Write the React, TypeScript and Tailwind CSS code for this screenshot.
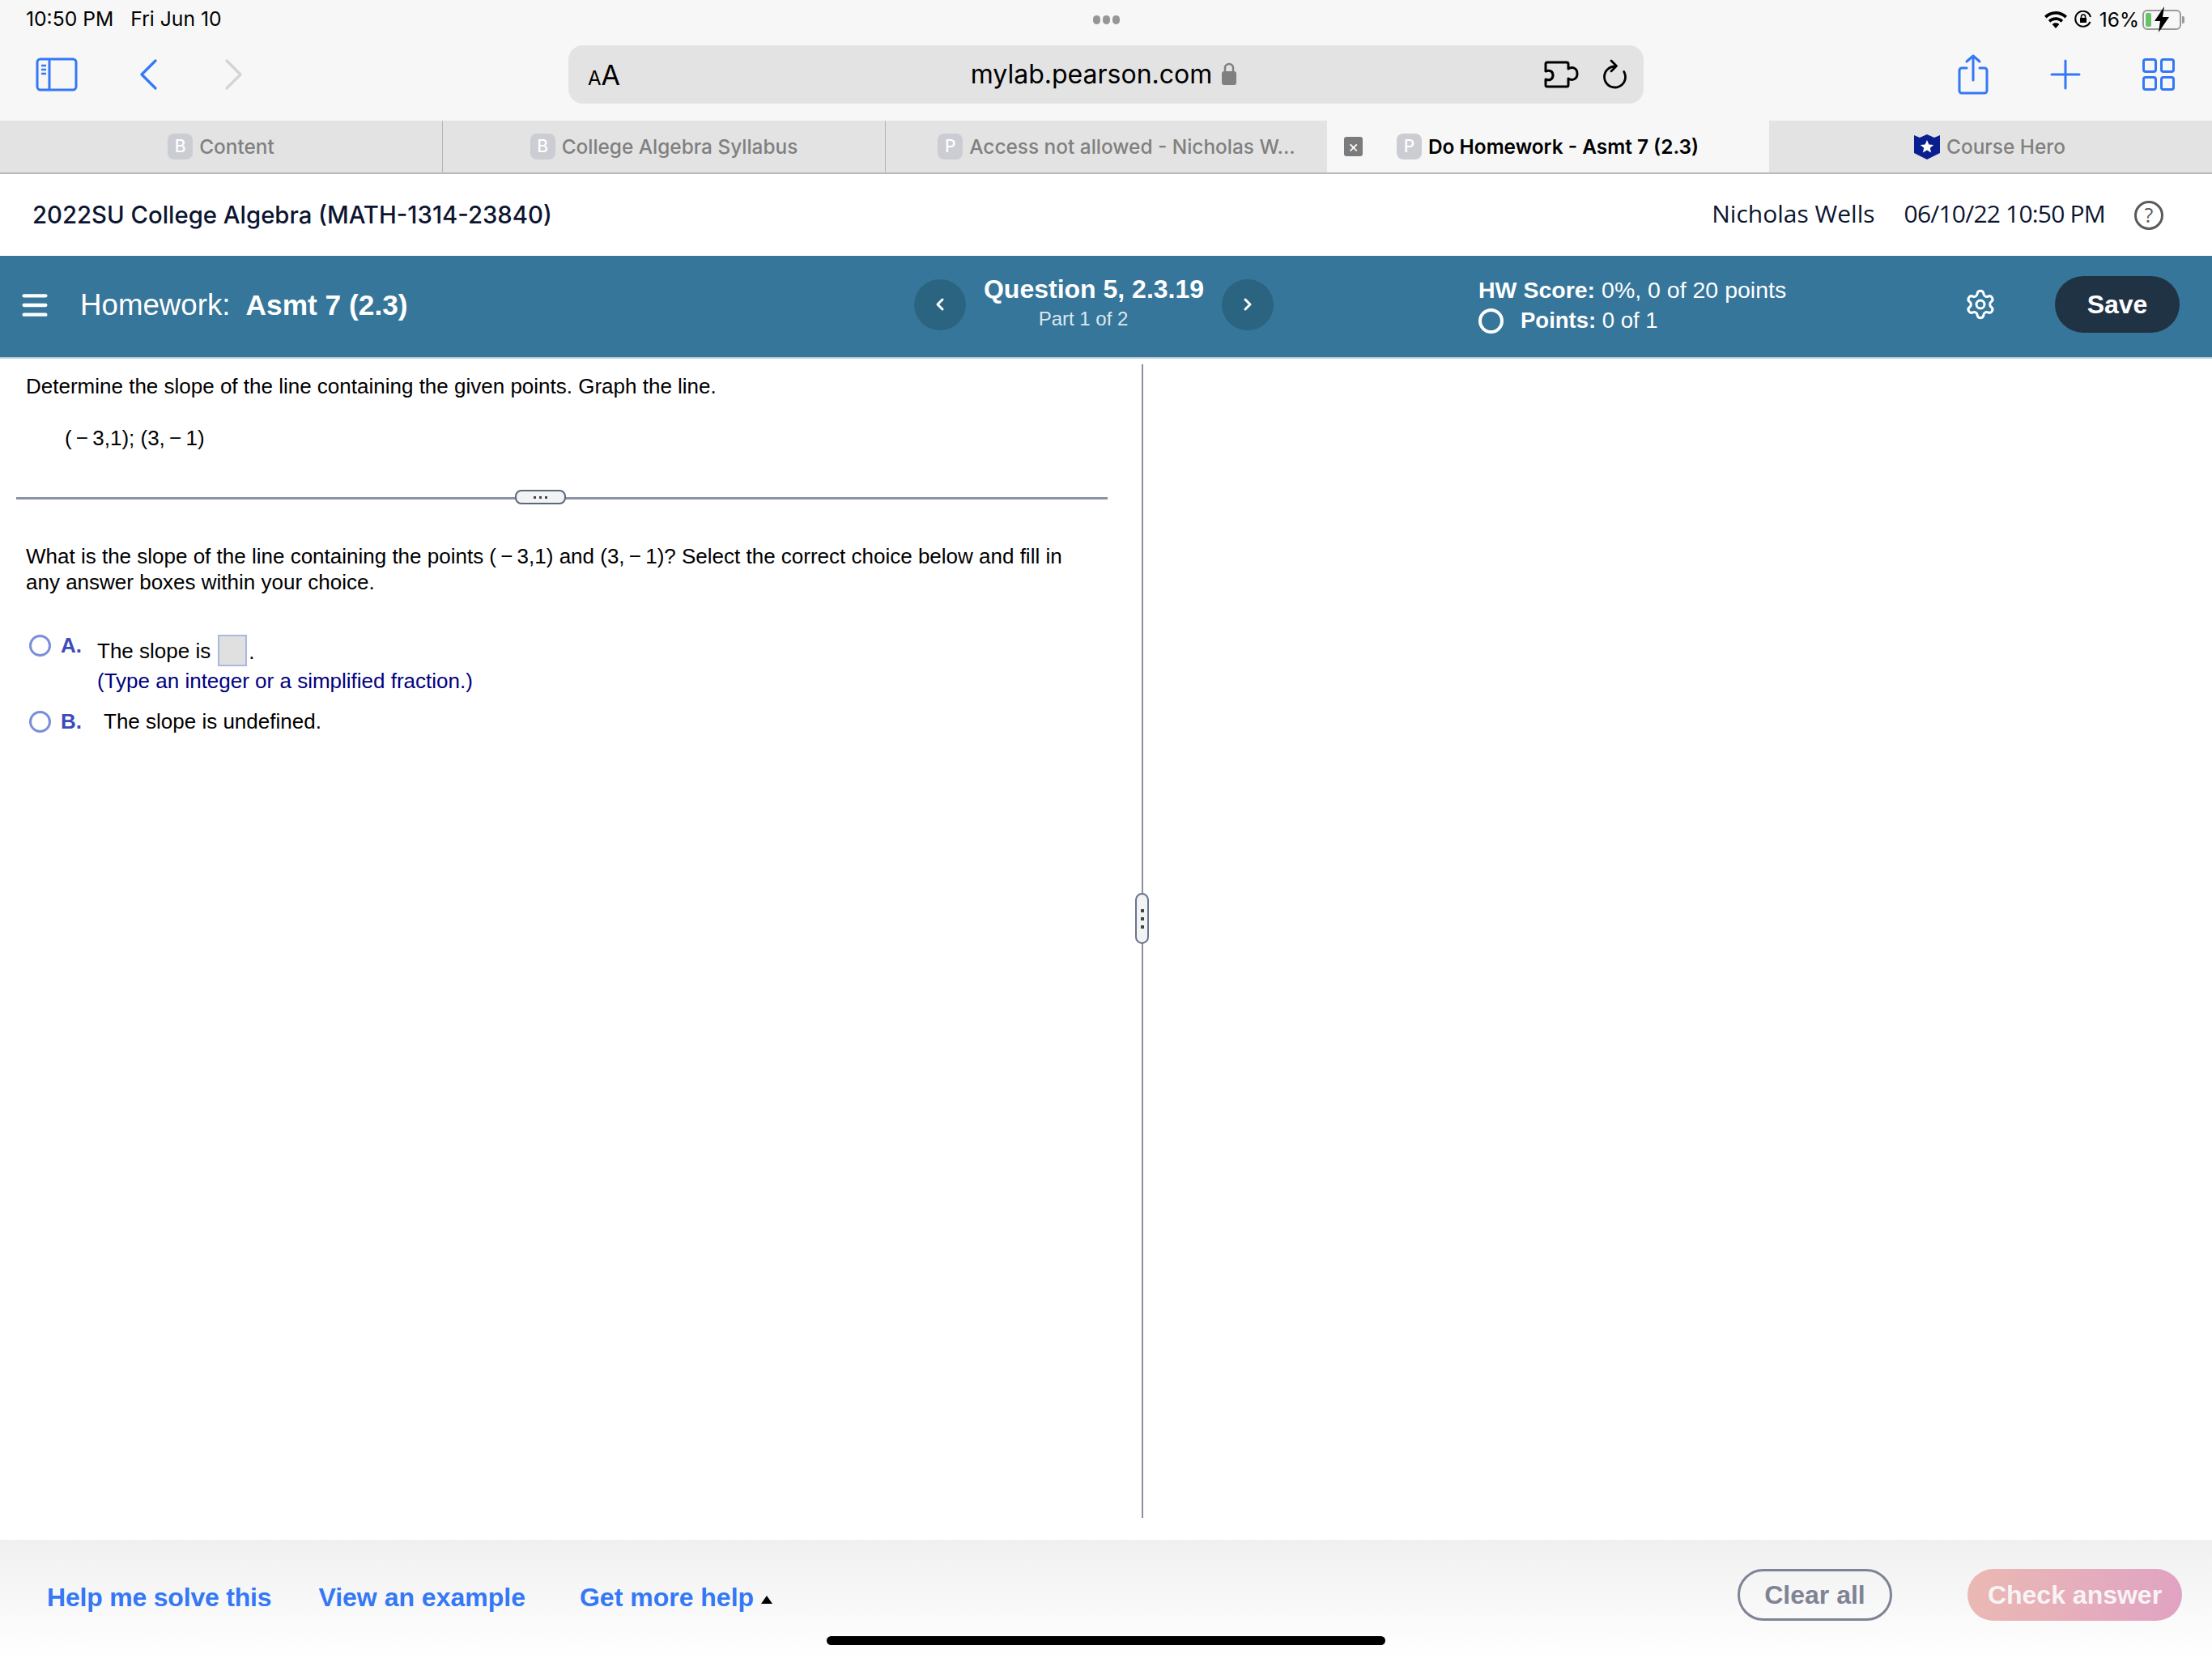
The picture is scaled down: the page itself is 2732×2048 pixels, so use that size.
import { ChevronLeft, ChevronRight, Menu, Settings } from "lucide-react";

const Blue = "#3478f6";

function Favicon({ letter }: { letter: string }) {
  return (
    <span className="flex h-[32px] w-[31px] shrink-0 items-center justify-center rounded-[8px] bg-[#cbcdd3] text-[21px] font-medium text-white">
      {letter}
    </span>
  );
}

function Tab({ letter, title, width, divider, shift }: { letter: string; title: string; width: string; divider?: boolean; shift?: boolean }) {
  return (
    <div className={`flex h-full items-center justify-center gap-[8px] bg-[#e3e3e3] ${width} ${divider ? "border-r border-[#b5b5b5]" : ""} ${shift ? "pl-[25px]" : ""}`}>
      <Favicon letter={letter} />
      <span className="text-[24.400px] font-medium text-[#808080]">{title}</span>
    </div>
  );
}

function SidebarIcon() {
  return (
    <svg width="52" height="42" viewBox="0 0 52 42" fill="none" stroke={Blue} strokeWidth="3">
      <rect x="2" y="2" width="48" height="38" rx="4" />
      <path d="M17 2v38" />
      <path d="M7 10h6M7 15h6M7 20h6" strokeWidth="2.5" />
    </svg>
  );
}

function BackIcon({ color, flip }: { color: string; flip?: boolean }) {
  return (
    <svg width="22" height="38" viewBox="0 0 22 38" fill="none" stroke={color} strokeWidth="3.2" strokeLinecap="round" strokeLinejoin="round" className={flip ? "-scale-x-100" : ""}>
      <path d="M20 2 3 19l17 17" />
    </svg>
  );
}

function PuzzleIcon() {
  return (
    <svg width="44" height="34" viewBox="0 0 44 34" fill="none" stroke="#000" strokeWidth="3" strokeLinejoin="round">
      <path d="M3 4a2 2 0 0 1 2-2h24a2 2 0 0 1 2 2v6c5-3 11-1 11 6s-6 9-11 6v8a2 2 0 0 1-2 2H5a2 2 0 0 1-2-2v-7c5 2 9 0 9-5s-4-7-9-5z" />
    </svg>
  );
}

function ReloadIcon() {
  return (
    <svg width="32" height="38" viewBox="0 0 32 38" fill="none" stroke="#000" strokeWidth="2.8" strokeLinecap="round" strokeLinejoin="round">
      <path d="M17 9A13 13 0 1 0 29.500 22c0-2.500-.6-4.500-1.800-6.500" />
      <path d="M12 2l6.500 6.500L12 15" />
    </svg>
  );
}

function ShareIcon() {
  return (
    <svg width="38" height="50" viewBox="0 0 38 50" fill="none" stroke={Blue} strokeWidth="3" strokeLinecap="round" strokeLinejoin="round">
      <path d="M11 17H5a3 3 0 0 0-3 3v25a3 3 0 0 0 3 3h28a3 3 0 0 0 3-3V20a3 3 0 0 0-3-3h-6" />
      <path d="M19 32V2M11 9l8-7 8 7" />
    </svg>
  );
}

function PlusIcon() {
  return (
    <svg width="38" height="38" viewBox="0 0 38 38" fill="none" stroke={Blue} strokeWidth="3" strokeLinecap="round">
      <path d="M19 2v34M2 19h34" />
    </svg>
  );
}

function TabsIcon() {
  return (
    <svg width="40" height="40" viewBox="0 0 40 40" fill="none" stroke={Blue} strokeWidth="3">
      <rect x="1.500" y="1.500" width="15" height="15" rx="2.500" />
      <rect x="23.500" y="1.500" width="15" height="15" rx="2.500" />
      <rect x="1.500" y="23.500" width="15" height="15" rx="2.500" />
      <rect x="23.500" y="23.500" width="15" height="15" rx="2.500" />
    </svg>
  );
}

function StatusIcons() {
  return (
    <div className="flex items-center justify-end gap-[9px] pr-[38px]">
      <svg width="28" height="21" viewBox="0 0 28 21" fill="#000">
        <path d="M14 0C8.600 0 3.800 2.100 0 5.700l2.600 2.800C5.700 5.600 9.600 3.800 14 3.800s8.300 1.800 11.400 4.700L28 5.700C24.200 2.100 19.400 0 14 0z" />
        <path d="M14 7.200c-3.500 0-6.800 1.400-9.200 3.700l2.600 2.800c1.700-1.700 4.100-2.700 6.600-2.700s4.900 1 6.600 2.700l2.600-2.800c-2.400-2.300-5.700-3.700-9.200-3.700z" />
        <path d="M14 14.200c-1.700 0-3.200.6-4.400 1.700L14 21l4.400-5.100c-1.200-1.100-2.700-1.700-4.400-1.700z" />
      </svg>
      <svg width="22" height="22" viewBox="0 0 22 22" fill="none" stroke="#000" strokeWidth="2">
        <path d="M19.500 14A9.500 9.500 0 1 1 20 8" />
        <rect x="7" y="9" width="8" height="6" fill="#000" stroke="none" />
        <path d="M8.500 9V7.500a2.500 2.500 0 0 1 5 0V9" strokeWidth="1.500" />
      </svg>
      <span className="text-[24.500px] text-black">16%</span>
      <div className="relative ml-[-5px] flex h-[25px] w-[48px] items-center rounded-[6px] border-2 border-[#9a9a9a] p-[2px]">
        <div className="h-full w-[7px] rounded-[2px] bg-[#65c466]" />
        <svg width="20" height="32" viewBox="0 0 20 32" fill="#000" className="absolute left-[12px] top-[-6px]">
          <path d="M13 0 1 18h7l-2 14 13-19h-8z" />
        </svg>
        <div className="absolute right-[-6px] top-[6px] h-[9px] w-[3px] rounded-r-[2px] bg-[#9a9a9a]" />
      </div>
    </div>
  );
}

function BrowserChrome() {
  return (
    <div className="bg-[#f7f7f7] font-['Inter',sans-serif]">
      <div className="grid h-[47px] grid-cols-3 items-center pt-[1px] text-[24.700px] text-black">
        <div className="flex gap-[21px] pl-[32px]">
          <span>10:50 PM</span>
          <span>Fri Jun 10</span>
        </div>
        <div className="flex justify-center gap-[3px] pl-[1px]">
          <span className="h-[11px] w-[9px] rounded-full bg-[#969696]" />
          <span className="h-[11px] w-[9px] rounded-full bg-[#969696]" />
          <span className="h-[11px] w-[9px] rounded-full bg-[#969696]" />
        </div>
        <StatusIcons />
      </div>
      <div className="flex h-[101px] items-start pt-[9px]">
        <div className="flex h-[72px] w-[702px] items-center pl-[44px]">
          <SidebarIcon />
          <div className="ml-[76px]">
            <BackIcon color={Blue} />
          </div>
          <div className="ml-[84px]">
            <BackIcon color="#d4d4d4" flip />
          </div>
        </div>
        <div className="flex h-[72px] w-[1328px] items-center rounded-[18px] bg-[#e3e3e3] pl-[24px] pr-[20px]">
          <span className="w-[40px] text-black">
            <span className="text-[24px]">A</span>
            <span className="text-[34px]">A</span>
          </span>
          <div className="flex flex-1 items-center justify-center gap-[12px] pl-[54px] text-[32px] text-black">
            <span>mylab.pearson.com</span>
            <svg width="18" height="28" viewBox="0 0 18 28" className="mt-[-2px]">
              <path d="M4 12V7a5 5 0 0 1 10 0v5" fill="none" stroke="#808080" strokeWidth="2.500" />
              <rect x="0" y="11" width="18" height="17" rx="3" fill="#808080" />
            </svg>
          </div>
          <div className="flex items-center gap-[28px]">
            <PuzzleIcon />
            <ReloadIcon />
          </div>
        </div>
        <div className="flex h-[72px] flex-1 items-center pl-[388px]">
          <ShareIcon />
          <div className="ml-[76px]">
            <PlusIcon />
          </div>
          <div className="ml-[76px]">
            <TabsIcon />
          </div>
        </div>
      </div>
      <div className="flex h-[67px] border-b-2 border-[#b9b9b9] pt-[1px]">
        <Tab letter="B" title="Content" width="w-[547px]" divider />
        <Tab letter="B" title="College Algebra Syllabus" width="w-[547px]" divider />
        <Tab letter="P" title="Access not allowed - Nicholas W..." width="w-[545px]" shift />
        <div className="flex h-full w-[546px] items-center bg-[#f7f7f7] pl-[21px]">
          <span className="flex h-[24px] w-[23px] items-center justify-center rounded-[3px] bg-[#7b7b7b] text-[20px] leading-none text-white">×</span>
          <div className="ml-[42px] flex items-center gap-[8px]">
            <Favicon letter="P" />
            <span className="text-[24.400px] font-semibold text-black">Do Homework - Asmt 7 (2.3)</span>
          </div>
        </div>
        <div className="flex h-full flex-1 items-center justify-center gap-[7px] bg-[#e3e3e3] pr-[3px]">
          <svg width="34" height="32" viewBox="0 0 34 32">
            <path d="M1 2l7 3 9-4 9 4 7-3v22l-16 8-16-8z" fill="#0a1f8f" />
            <path d="m17 8 2.400 5.400 5.800.6-4.400 3.800 1.300 5.700-5.100-3-5.100 3 1.300-5.700L8.800 14l5.800-.6z" fill="#fff" />
          </svg>
          <span className="text-[24.400px] font-medium text-[#808080]">Course Hero</span>
        </div>
      </div>
    </div>
  );
}

function CourseHeader() {
  return (
    <div className="flex h-[101px] items-center justify-between bg-white pl-[40px] pr-[60px]">
      <span className="font-['Inter',sans-serif] text-[29.300px] font-medium text-[#0c1530]">2022SU College Algebra (MATH-1314-23840)</span>
      <div className="flex items-center pb-[5px] font-['Open_Sans',sans-serif] text-[30px] text-[#0c1530]">
        <span>Nicholas Wells</span>
        <span className="ml-[36px] tracking-[-0.8px]">06/10/22 10:50 PM</span>
        <span className="ml-[36px] mt-[5px] flex h-[36px] w-[36px] items-center justify-center rounded-full border-[3px] border-[#5a5a5a] text-[25px] font-medium text-[#5a5a5a]">?</span>
      </div>
    </div>
  );
}

function RoundNav({ children }: { children: React.ReactNode }) {
  return <div className="mb-[2px] flex h-[63px] w-[64px] shrink-0 items-center justify-center rounded-full bg-[#2b6480]">{children}</div>;
}

function AssignmentBar() {
  return (
    <div className="flex h-[127px] items-center border-b-2 border-[#b5c9d8] bg-[#36769a] pb-[3px] font-['Liberation_Sans',sans-serif] text-white">
      <div className="flex w-[1129px] items-center pl-[23px]">
        <Menu size={40} strokeWidth={2.600} />
        <span className="ml-[36px] text-[36.700px]">Homework:</span>
        <span className="ml-[19px] text-[35.300px] font-bold">Asmt 7 (2.3)</span>
      </div>
      <div className="flex w-[697px] items-center">
        <RoundNav>
          <ChevronLeft size={24} strokeWidth={3} />
        </RoundNav>
        <div className="flex w-[316px] flex-col items-center pb-[8px]">
          <span className="text-[32px] font-bold leading-[38px]">Question 5, 2.3.19</span>
          <span className="mt-[4px] pr-[26px] text-[24px] leading-[28px] text-[#dce8f0]">Part 1 of 2</span>
        </div>
        <RoundNav>
          <ChevronRight size={24} strokeWidth={3} />
        </RoundNav>
      </div>
      <div className="flex w-[600px] flex-col text-[28.500px]">
        <span className="leading-[36px]">
          <b>HW Score:</b> 0%, 0 of 20 points
        </span>
        <span className="mt-[2px] flex items-center leading-[36px]">
          <span className="h-[31px] w-[31px] rounded-full border-[4px] border-white" />
          <span className="ml-[21px] text-[27.500px]">
            <b>Points:</b> 0 of 1
          </span>
        </span>
      </div>
      <div className="mb-[2px] flex w-[112px] justify-start pl-[-2px]">
        <Settings size={40} strokeWidth={1.800} />
      </div>
      <button className="mb-[2px] flex h-[70px] w-[154px] items-center justify-center rounded-full bg-[#1f3344] text-[32px] font-bold">Save</button>
    </div>
  );
}

function Radio() {
  return <span className="block h-[27px] w-[27px] shrink-0 rounded-full border-[3px] border-[#7b8fd8] bg-white" />;
}

function QuestionPane() {
  return (
    <div className="relative w-[1410px] shrink-0 pt-[18px] text-[26px] leading-[32px] text-black">
      <p className="pl-[32px]">Determine the slope of the line containing the given points. Graph the line.</p>
      <p className="mt-[32px] pl-[80px]">{"(\u2009\u2212\u20093,1); (3,\u2009\u2212\u20091)"}</p>
      <div className="relative ml-[20px] mt-[57px] h-[3px] w-[1348px] bg-[#8a93a3]">
        <div className="absolute left-[616px] top-[-9px] flex h-[18px] w-[63px] items-center justify-center gap-[4px] rounded-[8px] border-2 border-[#5b6878] bg-[#f2f3f5]">
          <span className="h-[3px] w-[3px] bg-[#444]" />
          <span className="h-[3px] w-[3px] bg-[#444]" />
          <span className="h-[3px] w-[3px] bg-[#444]" />
        </div>
      </div>
      <p className="mt-[54px] w-[1330px] pl-[32px]">
        {"What is the slope of the line containing the points (\u2009\u2212\u20093,1) and (3,\u2009\u2212\u20091)? Select the correct choice below and fill in any answer boxes within your choice."}
      </p>
      <div className="mt-[49px] flex items-start pl-[36px]">
        <Radio />
        <span className="ml-[12px] font-bold leading-[27px] text-[#3b4cb8]">A.</span>
        <div className="ml-[19px]">
          <div className="flex items-center">
            <span>The slope is</span>
            <span className="ml-[9px] h-[39px] w-[36px] border-2 border-[#a9b8e0] bg-[#e0e0e0]" />
            <span className="ml-[2px] mt-[3px]">.</span>
          </div>
          <p className="mt-[2px] text-[#000080]">(Type an integer or a simplified fraction.)</p>
        </div>
      </div>
      <div className="mt-[18px] flex items-center pl-[36px]">
        <Radio />
        <span className="ml-[12px] font-bold text-[#3b4cb8]">B.</span>
        <span className="ml-[27px]">The slope is undefined.</span>
      </div>
    </div>
  );
}

function PaneDivider() {
  return (
    <div className="relative mt-[7px] h-[1425px] w-[2px] bg-[#8a8f9e]">
      <div className="absolute left-[-8px] top-[653px] flex h-[63px] w-[17px] flex-col items-center justify-center gap-[6px] rounded-full border-2 border-[#68768a] bg-[#f2f3f5]">
        <span className="h-[4px] w-[4px] bg-[#444]" />
        <span className="h-[4px] w-[4px] bg-[#444]" />
        <span className="h-[4px] w-[4px] bg-[#444]" />
      </div>
    </div>
  );
}

function Footer() {
  return (
    <div className="relative flex h-[146px] items-start bg-gradient-to-b from-[#f0f0f0] to-white pt-[36px] font-['Liberation_Sans',sans-serif]">
      <div className="flex h-[64px] flex-1 items-center pl-[58px] pt-[5px] text-[32px] font-bold text-[#3478f6]">
        <span className="tracking-[-0.2px]">Help me solve this</span>
        <span className="ml-[58px]">View an example</span>
        <span className="ml-[67px]">Get more help</span>
        <svg width="14" height="10" viewBox="0 0 14 10" className="ml-[9px] mt-[6px]">
          <path d="M7 0l7 10H0z" fill="#000" />
        </svg>
      </div>
      <button className="flex h-[64px] w-[191px] items-center justify-center rounded-full border-[3px] border-[#7f8494] text-[32px] font-bold text-[#7f8494]">Clear all</button>
      <button className="ml-[93px] mr-[37px] flex h-[64px] w-[265px] items-center justify-center rounded-full bg-gradient-to-r from-[#ebb9b3] to-[#e0a3c3] text-[32px] font-bold text-[#f8f4f6]">Check answer</button>
      <div className="absolute bottom-[16px] left-[1021px] h-[11px] w-[690px] rounded-full bg-black" />
    </div>
  );
}

export default function App() {
  return (
    <div className="flex h-[2048px] w-[2732px] flex-col overflow-hidden bg-white font-['Liberation_Sans',sans-serif]">
      <BrowserChrome />
      <CourseHeader />
      <AssignmentBar />
      <div className="flex flex-1">
        <QuestionPane />
        <PaneDivider />
      </div>
      <Footer />
    </div>
  );
}
